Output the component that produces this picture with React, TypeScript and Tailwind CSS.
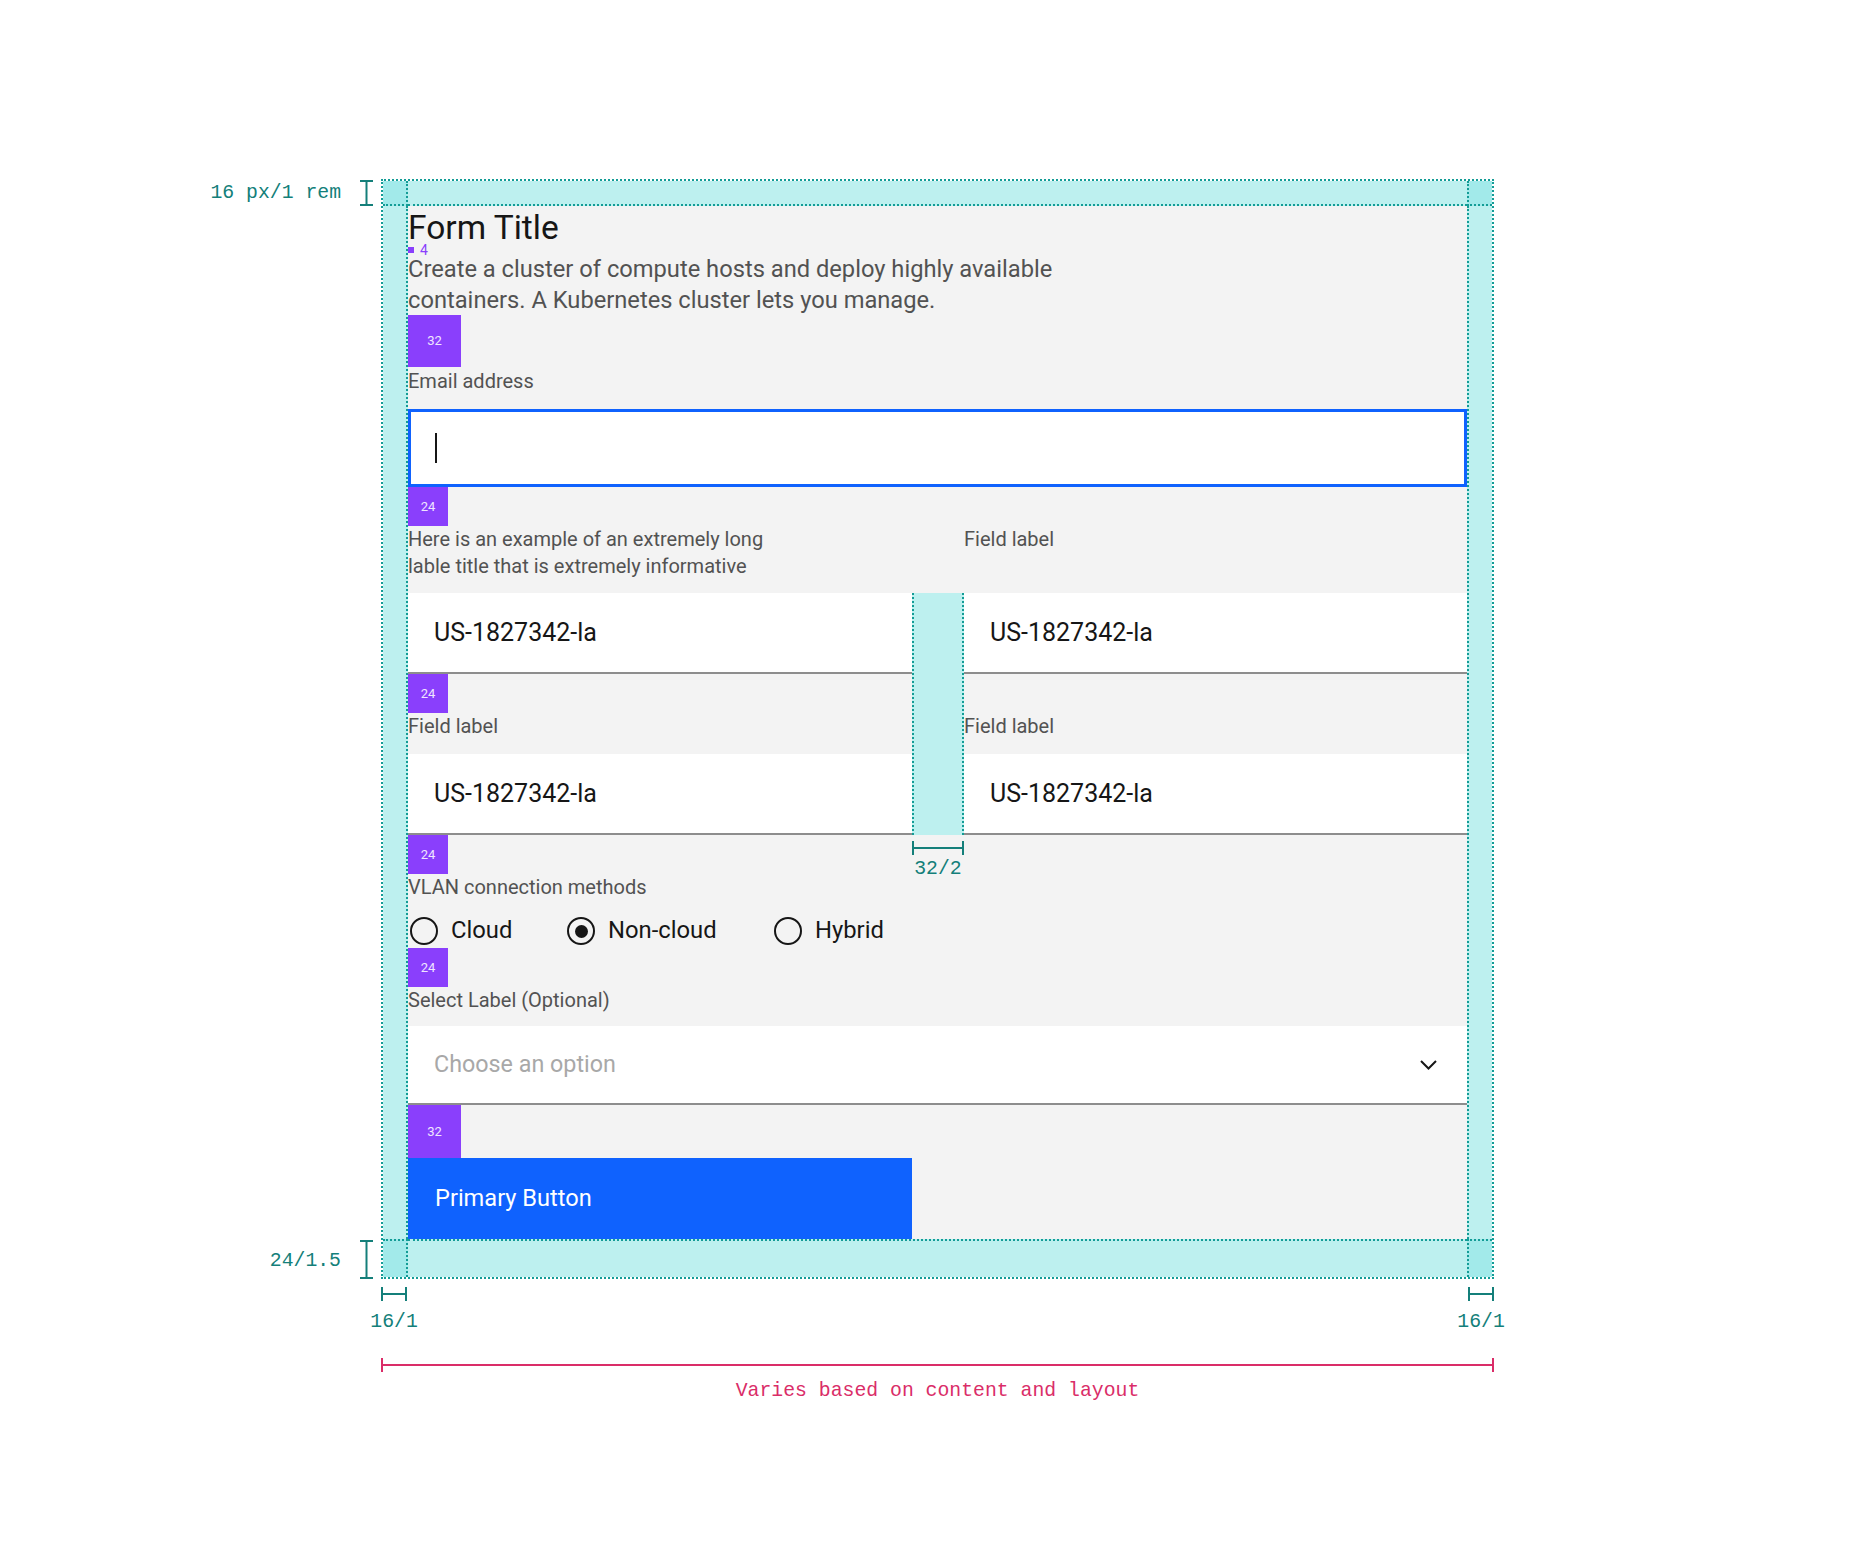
import React from "react";

function IBeam({ h }: { h: number }) {
  return (
    <svg width="13" height={h} viewBox={`0 0 13 ${h}`} className="shrink-0">
      <line x1="6.5" y1="1" x2="6.5" y2={h - 1} stroke="#147f7a" strokeWidth="2" />
      <line x1="0" y1="1" x2="13" y2="1" stroke="#147f7a" strokeWidth="2" />
      <line x1="0" y1={h - 1} x2="13" y2={h - 1} stroke="#147f7a" strokeWidth="2" />
    </svg>
  );
}

function HBar({ w, color }: { w: number; color: string }) {
  return (
    <svg width={w} height="14" viewBox={`0 0 ${w} 14`} className="block shrink-0">
      <line x1="1" y1="0" x2="1" y2="14" stroke={color} strokeWidth="2" />
      <line x1={w - 1} y1="0" x2={w - 1} y2="14" stroke={color} strokeWidth="2" />
      <line x1="0" y1="7" x2={w} y2="7" stroke={color} strokeWidth="2" />
    </svg>
  );
}

function Spacer({ n, className }: { n: string; className: string }) {
  return (
    <div
      className={`flex shrink-0 items-center justify-center bg-[#8a3ffc] text-[13px] text-[#efe5ff] ${className}`}
    >
      {n}
    </div>
  );
}

function Label({ children, className = "" }: { children: React.ReactNode; className?: string }) {
  return <div className={`text-[20px] leading-[27px] text-[#525252] ${className}`}>{children}</div>;
}

function Field({ value, className = "" }: { value: string; className?: string }) {
  return (
    <div
      className={`flex h-[81px] items-center border-b-2 border-[#8d8d8d] bg-white pl-[26px] text-[25px] text-[#161616] ${className}`}
    >
      {value}
    </div>
  );
}

function Radio({ label, checked = false, className = "" }: { label: string; checked?: boolean; className?: string }) {
  return (
    <div className={`flex items-center gap-[13px] ${className}`}>
      <div className="flex h-[28px] w-[28px] items-center justify-center rounded-full border-[2.5px] border-[#161616]">
        {checked && <div className="h-[13px] w-[13px] rounded-full bg-[#161616]" />}
      </div>
      <span className="text-[23.8px] text-[#161616]">{label}</span>
    </div>
  );
}

export default function App() {
  return (
    <div className="h-[1549px] w-[1856px] bg-white pl-[200px] pt-[179px] font-['Roboto',sans-serif]">
      <div className="flex">
        {/* left annotations */}
        <div className="flex w-[181px] flex-col justify-between font-['Liberation_Mono',monospace] text-[19.8px] text-[#147f7a]">
          <div className="flex h-[27px] items-center justify-end pr-[8px]">
            <span className="mr-[19px] mt-[2px] whitespace-nowrap">16 px/1 rem</span>
            <IBeam h={26} />
          </div>
          <div className="flex h-[40px] items-center justify-end pr-[8px]">
            <span className="mr-[19px] mt-[5px] whitespace-nowrap">24/1.5</span>
            <IBeam h={39} />
          </div>
        </div>

        {/* frame */}
        <div className="grid w-[1113px] grid-cols-[25px_1fr_25px] grid-rows-[25px_auto_38px] border-2 border-dotted border-[#139c96]">
          <div className="border-r-2 border-b-2 border-dotted border-[#139c96] bg-[#a2eaea]" />
          <div className="border-b-2 border-dotted border-[#139c96] bg-[#bdf0ef]" />
          <div className="border-l-2 border-b-2 border-dotted border-[#139c96] bg-[#a2eaea]" />

          <div className="border-r-2 border-dotted border-[#139c96] bg-[#bdf0ef]" />
          <div className="flex flex-col bg-[#f3f3f3]">
            <div className="h-[41px] pt-[3px] text-[33.5px] leading-[38px] text-[#161616]">Form Title</div>
            <div className="flex h-[6px] items-center">
              <div className="h-[6px] w-[6px] bg-[#8a3ffc]" />
              <span className="ml-[6px] text-[14px] leading-[6px] text-[#8a3ffc]">4</span>
            </div>
            <div className="pt-[1px] text-[23.7px] leading-[30.5px] text-[#525252]">
              Create a cluster of compute hosts and deploy highly available
              <br />
              containers. A Kubernetes cluster lets you manage.
            </div>
            <Spacer n="32" className="h-[52px] w-[53px]" />
            <Label className="mb-[14px] pt-[1px]">Email address</Label>
            <div className="flex h-[78px] items-center border-[3px] border-[#0f62fe] bg-white">
              <div className="ml-[24px] h-[30px] w-[2px] bg-[#161616]" />
            </div>
            <Spacer n="24" className="h-[39px] w-[40px]" />

            <div className="grid grid-cols-[504px_52px_1fr]">
              <Label className="col-start-1 row-start-1 mb-[13px]">
                Here is an example of an extremely long
                <br />
                lable title that is extremely informative
              </Label>
              <Label className="col-start-3 row-start-1">Field label</Label>
              <Field value="US-1827342-la" className="col-start-1 row-start-2" />
              <div className="relative col-start-2 row-start-2 row-span-4 border-x-2 border-dotted border-[#139c96] bg-[#bdf0ef]">
                <div className="absolute left-[-2px] right-[-2px] top-full mt-[6px] flex flex-col items-center font-['Liberation_Mono',monospace] text-[19.8px] leading-[24px] text-[#147f7a]">
                  <HBar w={52} color="#147f7a" />
                  <span className="mt-[2px] whitespace-nowrap">32/2</span>
                </div>
              </div>
              <Field value="US-1827342-la" className="col-start-3 row-start-2" />
              <Spacer n="24" className="col-start-1 row-start-3 h-[39px] w-[40px]" />
              <Label className="col-start-1 row-start-4 mb-[14px]">Field label</Label>
              <Label className="col-start-3 row-start-4">Field label</Label>
              <Field value="US-1827342-la" className="col-start-1 row-start-5" />
              <Field value="US-1827342-la" className="col-start-3 row-start-5" />
            </div>

            <Spacer n="24" className="h-[39px] w-[40px]" />
            <Label className="mb-[13px]">VLAN connection methods</Label>
            <div className="flex h-[34px] items-center pl-[2px]">
              <Radio label="Cloud" className="w-[157px]" />
              <Radio label="Non-cloud" checked className="w-[207px]" />
              <Radio label="Hybrid" />
            </div>
            <Spacer n="24" className="h-[39px] w-[40px]" />
            <Label className="mb-[12px]">Select Label (Optional)</Label>
            <div className="flex h-[79px] items-center justify-between border-b-2 border-[#8d8d8d] bg-white pl-[26px] pr-[30px]">
              <span className="text-[23.3px] text-[#a8a8a8]">Choose an option</span>
              <svg width="17" height="10" viewBox="0 0 17 10">
                <polyline points="1,1 8.5,8.5 16,1" fill="none" stroke="#161616" strokeWidth="2" />
              </svg>
            </div>
            <Spacer n="32" className="h-[53px] w-[53px]" />
            <button className="flex h-[81px] w-[504px] items-center bg-[#0f62fe] pl-[27px] text-[23.6px] text-white">
              Primary Button
            </button>
          </div>
          <div className="border-l-2 border-dotted border-[#139c96] bg-[#bdf0ef]" />

          <div className="border-r-2 border-t-2 border-dotted border-[#139c96] bg-[#a2eaea]" />
          <div className="border-t-2 border-dotted border-[#139c96] bg-[#bdf0ef]" />
          <div className="border-l-2 border-t-2 border-dotted border-[#139c96] bg-[#a2eaea]" />
        </div>
      </div>

      {/* bottom annotations */}
      <div className="ml-[181px] w-[1113px] font-['Liberation_Mono',monospace] text-[19.8px] leading-[24px]">
        <div className="mt-[8px] flex justify-between text-[#147f7a]">
          <div className="flex w-[26px] flex-col items-center">
            <HBar w={26} color="#147f7a" />
            <span className="mt-[9px] whitespace-nowrap">16/1</span>
          </div>
          <div className="flex w-[26px] flex-col items-center">
            <HBar w={26} color="#147f7a" />
            <span className="mt-[9px] whitespace-nowrap">16/1</span>
          </div>
        </div>
        <div className="mt-[24px] flex flex-col items-center text-[#da2d68]">
          <HBar w={1113} color="#da2d68" />
          <span className="mt-[7px] whitespace-nowrap">Varies based on content and layout</span>
        </div>
      </div>
    </div>
  );
}
